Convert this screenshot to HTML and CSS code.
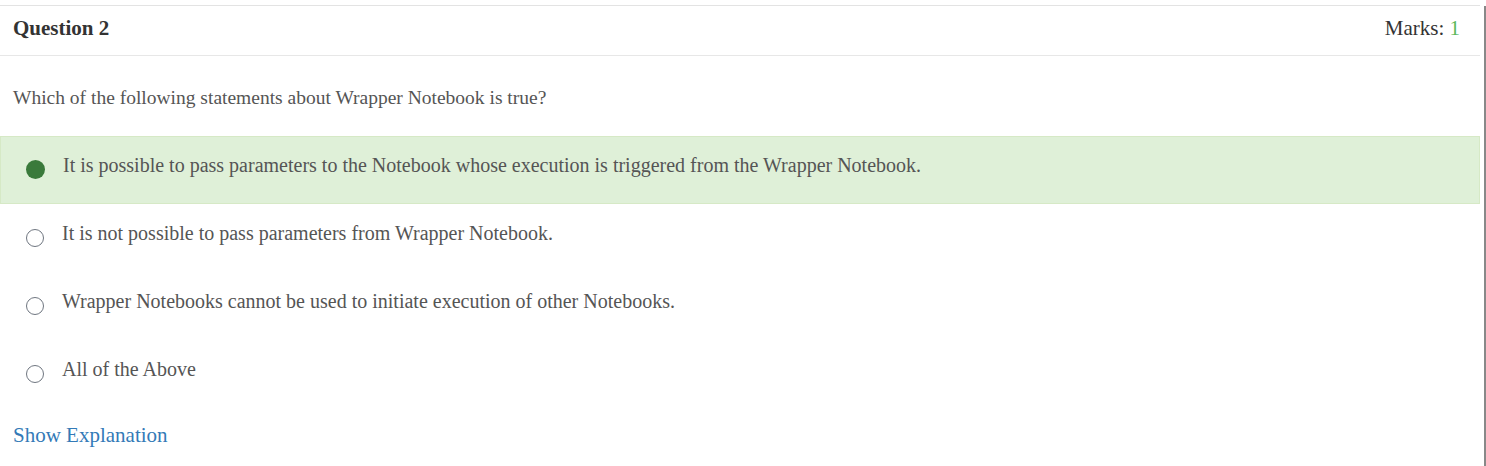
FILE: index.html
```html
<!DOCTYPE html>
<html>
<head>
<meta charset="utf-8">
<link rel="stylesheet" href="styles.css">
</head>
<body>
<div class="page">
  <div class="card">
    <div class="header">
      <span class="title">Question 2</span>
      <span class="marks">Marks: <span class="marks-value">1</span></span>
    </div>
    <div class="question">Which of the following statements about Wrapper Notebook is true?</div>
    <div class="options">
      <div class="option selected">
        <span class="radio checked"></span>
        <span class="option-text">It is possible to pass parameters to the Notebook whose execution is triggered from the Wrapper Notebook.</span>
      </div>
      <div class="option">
        <span class="radio"></span>
        <span class="option-text">It is not possible to pass parameters from Wrapper Notebook.</span>
      </div>
      <div class="option">
        <span class="radio"></span>
        <span class="option-text">Wrapper Notebooks cannot be used to initiate execution of other Notebooks.</span>
      </div>
      <div class="option">
        <span class="radio"></span>
        <span class="option-text">All of the Above</span>
      </div>
    </div>
    <a class="explain" href="#">Show Explanation</a>
  </div>
  <div class="edge"></div>
</div>
</body>
</html>
```
FILE: styles.css
```css
html, body {
  margin: 0;
  padding: 0;
  background: #ffffff;
}
body {
  font-family: "Liberation Serif", "Times New Roman", serif;
  font-size: 20px;
  color: #555555;
  overflow: hidden;
}
.page {
  display: flex;
  align-items: flex-start;
  gap: 4px;
  height: 466px;
}
.card {
  width: 1480px;
  margin-top: 5px;
  border-top: 1px solid #e3e3e3;
}
.edge {
  width: 2px;
  margin-top: 6px;
  height: 460px;
  background: #888888;
}
.header {
  height: 49px;
  border-bottom: 1px solid #e7e7e7;
  display: flex;
  align-items: center;
  justify-content: space-between;
  padding: 0 20px 0 13px;
  font-size: 21px;
}
.title {
  font-weight: bold;
  color: #333333;
  line-height: 20px;
  margin-top: -5px;
}
.marks {
  color: #333333;
  line-height: 20px;
  margin-top: -5px;
}
.marks-value {
  color: #5cb85c;
}
.question {
  font-size: 19.5px;
  line-height: 20px;
  padding: 32px 13px 28px;
}
.option {
  display: flex;
  align-items: flex-start;
  padding: 18px 0 24px 0;
  border: 1px solid transparent;
  line-height: 20px;
}
.option.selected {
  background: #dff0d8;
  border-color: #d6e9c6;
}
.radio {
  box-sizing: border-box;
  width: 18px;
  height: 18px;
  margin: 6px 0 0 25px;
  border-radius: 50%;
  border: 1.5px solid #6f7680;
  background: #ffffff;
  flex: none;
}
.radio.checked {
  border: none;
  background: #3a7a3b;
  width: 19px;
  height: 19px;
  margin-top: 5px;
}
.option-text {
  margin-left: 18px;
}
.explain {
  display: block;
  margin: 17px 13px 0;
  font-size: 21px;
  line-height: 20px;
  color: #337ab7;
  text-decoration: none;
}
```
